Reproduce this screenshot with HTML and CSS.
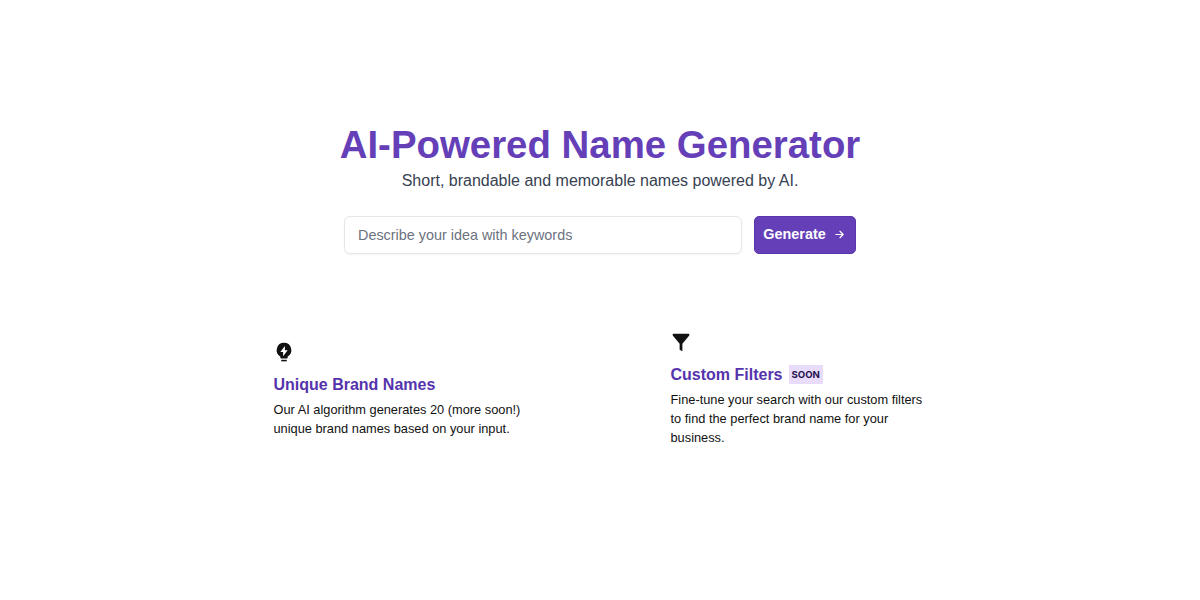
FILE: index.html
```html
<!DOCTYPE html>
<html lang="en">
<head>
<meta charset="utf-8">
<title>AI-Powered Name Generator</title>
<link rel="stylesheet" href="styles.css">
</head>
<body>
<main class="page">
  <section class="hero">
    <h1 class="title">AI-Powered Name Generator</h1>
    <p class="subtitle">Short, brandable and memorable names powered by AI.</p>
    <form class="search">
      <input class="search-input" type="text" placeholder="Describe your idea with keywords">
      <button class="search-button" type="button">Generate
        <svg class="arrow" viewBox="0 0 24 24" width="11" height="11" fill="none" stroke="currentColor" stroke-width="2.6" stroke-linecap="round" stroke-linejoin="round"><path d="M4 12h16M13 5l7 7-7 7"/></svg>
      </button>
    </form>
  </section>
  <section class="features">
    <article class="feature">
      <svg class="icon" viewBox="0 0 24 24" width="22" height="22"><path fill="#111" fill-rule="evenodd" d="M12 2a8 8 0 0 0-4 14.900V18a1 1 0 0 0 1 1h6a1 1 0 0 0 1-1v-1.100A8 8 0 0 0 12 2zm1 3.500v4.500h3l-5 6.500V12H8l5-6.500z"/><path fill="#111" d="M9 20.500h6v1.700H9z"/></svg>
      <h2 class="feature-title">Unique Brand Names</h2>
      <p class="feature-text">Our AI algorithm generates 20 (more soon!) unique brand names based on your input.</p>
    </article>
    <article class="feature">
      <svg class="icon" viewBox="0 0 24 24" width="22" height="22"><path fill="#111" d="M3 3h18v2l-7.500 9v8l-3-1.500V14L3 5V3z"/></svg>
      <h2 class="feature-title">Custom Filters <span class="badge">SOON</span></h2>
      <p class="feature-text">Fine-tune your search with our custom filters to find the perfect brand name for your business.</p>
    </article>
  </section>
</main>
</body>
</html>
```
FILE: styles.css
```css
* { box-sizing: border-box; }
body {
  margin: 0;
  background: #fff;
  font-family: "Liberation Sans", Arial, sans-serif;
  color: #000;
}
.page {
  height: 600px;
  padding-top: 122px;
  display: flex;
  flex-direction: column;
  align-items: center;
}
.hero {
  display: flex;
  flex-direction: column;
  align-items: center;
}
.title {
  margin: 0;
  font-size: 38.4px;
  line-height: 46px;
  font-weight: 700;
  color: #653fb8;
}
.subtitle {
  margin: 1px 0 0;
  font-size: 16px;
  line-height: 24px;
  color: #374151;
}
.search {
  margin-top: 23px;
  width: 512px;
  display: flex;
  gap: 12px;
}
.search-input {
  flex: 1;
  min-width: 0;
  height: 38px;
  padding: 0 13px;
  border: 1px solid #e5e7eb;
  border-radius: 6px;
  background: #fff;
  box-shadow: 0 1px 2px rgba(0,0,0,.05);
  font: 14.4px "Liberation Sans", Arial, sans-serif;
  outline: none;
}
.search-input::placeholder { color: #6b7280; opacity: 1; }
.search-button {
  width: 102px;
  height: 38px;
  padding: 0 2px 2px 0;
  display: flex;
  align-items: center;
  justify-content: center;
  gap: 8px;
  border: 1px solid #5b35ad;
  border-radius: 5px;
  background: #653fb8;
  color: #fff;
  font: 700 14.4px "Liberation Sans", Arial, sans-serif;
}
.features {
  margin-top: 77px;
  width: 653px;
  display: grid;
  grid-template-columns: 397px 256px;
  align-items: center;
}
.feature { width: 256px; }
.icon { display: block; margin-left: -1px; }
.feature-title {
  margin: 10px 0 0;
  font-size: 16px;
  line-height: 24px;
  font-weight: 700;
  color: #5533ac;
  display: flex;
  align-items: center;
  gap: 6px;
}
.badge {
  padding: 0 3px;
  margin-bottom: 2px;
  background: #e9dcfa;
  color: #24124f;
  font: 700 9.6px/19px Inter, "Liberation Sans", sans-serif;
}
.feature-text {
  margin: 3px 0 0;
  font-size: 12.8px;
  line-height: 19px;
  color: #111;
}
```
